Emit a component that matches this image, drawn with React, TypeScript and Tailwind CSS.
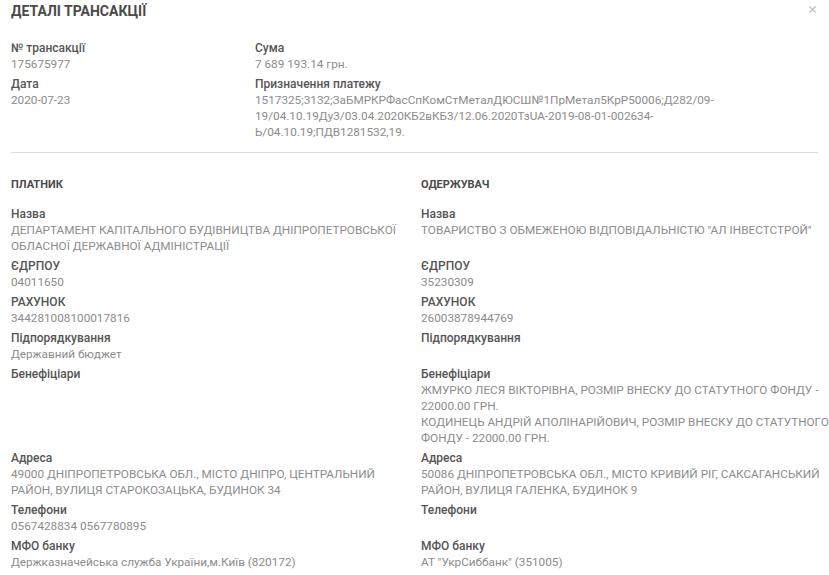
import { X } from 'lucide-react';

type Field = { label: string; lines: string[] };

const topLeft: Field[] = [
  { label: '№ трансакції', lines: ['175675977'] },
  { label: 'Дата', lines: ['2020-07-23'] },
];

const topRight: Field[] = [
  { label: 'Сума', lines: ['7 689 193.14 грн.'] },
  {
    label: 'Призначення платежу',
    lines: [
      '1517325;3132;ЗаБМРКРФасСпКомСтМеталДЮСШ№1ПрМетал5КрР50006;Д282/09-',
      '19/04.10.19Ду3/03.04.2020КБ2вКБ3/12.06.2020ТзUA-2019-08-01-002634-',
      'Ь/04.10.19;ПДВ1281532,19.',
    ],
  },
];

// each row: [платник, одержувач]
const rows: [Field, Field][] = [
  [
    {
      label: 'Назва',
      lines: ['ДЕПАРТАМЕНТ КАПІТАЛЬНОГО БУДІВНИЦТВА ДНІПРОПЕТРОВСЬКОЇ', 'ОБЛАСНОЇ ДЕРЖАВНОЇ АДМІНІСТРАЦІЇ'],
    },
    { label: 'Назва', lines: ['ТОВАРИСТВО З ОБМЕЖЕНОЮ ВІДПОВІДАЛЬНІСТЮ "АЛ ІНВЕСТСТРОЙ"'] },
  ],
  [
    { label: 'ЄДРПОУ', lines: ['04011650'] },
    { label: 'ЄДРПОУ', lines: ['35230309'] },
  ],
  [
    { label: 'РАХУНОК', lines: ['344281008100017816'] },
    { label: 'РАХУНОК', lines: ['26003878944769'] },
  ],
  [
    { label: 'Підпорядкування', lines: ['Державний бюджет'] },
    { label: 'Підпорядкування', lines: [] },
  ],
  [
    { label: 'Бенефіціари', lines: [] },
    {
      label: 'Бенефіціари',
      lines: [
        'ЖМУРКО ЛЕСЯ ВІКТОРІВНА, РОЗМІР ВНЕСКУ ДО СТАТУТНОГО ФОНДУ -',
        '22000.00 ГРН.',
        'КОДИНЕЦЬ АНДРІЙ АПОЛІНАРІЙОВИЧ, РОЗМІР ВНЕСКУ ДО СТАТУТНОГО',
        'ФОНДУ - 22000.00 ГРН.',
      ],
    },
  ],
  [
    {
      label: 'Адреса',
      lines: ['49000 ДНІПРОПЕТРОВСЬКА ОБЛ., МІСТО ДНІПРО, ЦЕНТРАЛЬНИЙ', 'РАЙОН, ВУЛИЦЯ СТАРОКОЗАЦЬКА, БУДИНОК 34'],
    },
    {
      label: 'Адреса',
      lines: ['50086 ДНІПРОПЕТРОВСЬКА ОБЛ., МІСТО КРИВИЙ РІГ, САКСАГАНСЬКИЙ', 'РАЙОН, ВУЛИЦЯ ГАЛЕНКА, БУДИНОК 9'],
    },
  ],
  [
    { label: 'Телефони', lines: ['0567428834 0567780895'] },
    { label: 'Телефони', lines: [] },
  ],
  [
    { label: 'МФО банку', lines: ['Держказначейська служба України,м.Київ (820172)'] },
    { label: 'МФО банку', lines: ['АТ "УкрСиббанк" (351005)'] },
  ],
];

function FieldBlock({ field }: { field: Field }) {
  return (
    <div className="mb-[5px]">
      <div className="text-[12px] leading-[15px] font-medium text-[#555]">{field.label}</div>
      {field.lines.length === 0 ? (
        <div className="h-[16px]" />
      ) : (
        field.lines.map((line, i) => (
          <div key={i} className="text-[11.75px] leading-[16px] text-[#8c8c8c] whitespace-nowrap">
            {line}
          </div>
        ))
      )}
    </div>
  );
}

export default function App() {
  return (
    <div
      className="w-[829px] h-[575px] bg-white px-[11px] overflow-hidden"
      style={{ fontFamily: 'Roboto, "Open Sans", sans-serif' }}
    >
      {/* Header */}
      <div className="flex items-center justify-between">
        <h1 className="text-[14px] leading-[22px] font-bold uppercase text-[#4a4a4a]">Деталі трансакції</h1>
        <X className="w-[11px] h-[11px] text-[#c4c4c4] -mt-[4px]" strokeWidth={3} />
      </div>

      {/* Transaction info */}
      <div className="grid grid-cols-[244px_1fr] mt-[19px]">
        <div>
          {topLeft.map((f) => (
            <FieldBlock key={f.label} field={f} />
          ))}
        </div>
        <div>
          {topRight.map((f) => (
            <FieldBlock key={f.label} field={f} />
          ))}
        </div>
      </div>

      <div className="mt-[7px] border-t border-[#dcdcdc]" />

      {/* Parties */}
      <div className="grid grid-cols-[410px_1fr] mt-[24px]">
        <div className="text-[11px] leading-[16px] font-bold text-[#4a4a4a] uppercase">Платник</div>
        <div className="text-[11px] leading-[16px] font-bold text-[#4a4a4a] uppercase">Одержувач</div>
      </div>

      <div className="grid grid-cols-[410px_1fr] items-start mt-[14px]">
        {rows.map(([left, right], i) => (
          <div key={i} className="contents">
            <FieldBlock field={left} />
            <FieldBlock field={right} />
          </div>
        ))}
      </div>
    </div>
  );
}
